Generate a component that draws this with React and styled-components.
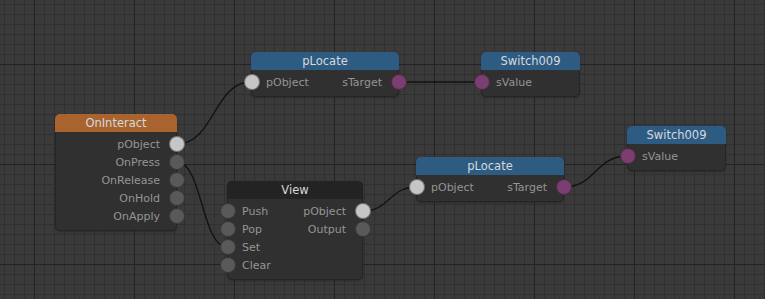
import React from 'react';
import styled, { createGlobalStyle } from 'styled-components';

const GlobalStyle = createGlobalStyle`
  html, body {
    margin: 0;
    padding: 0;
    background: #393939;
  }
  body {
    font-family: "DejaVu Sans", Verdana, sans-serif;
  }
`;

const Canvas = styled.div`
  position: relative;
  width: 765px;
  height: 299px;
  overflow: hidden;
  background-color: #3a3a3a;
  background-image:
    linear-gradient(to right, #232323 1px, transparent 1px),
    linear-gradient(to bottom, #232323 1px, transparent 1px),
    linear-gradient(to right, #303030 1px, transparent 1px),
    linear-gradient(to bottom, #303030 1px, transparent 1px);
  background-size: 100px 100px, 100px 100px, 10px 10px, 10px 10px;
  background-position: 34px 0, 0 64px, 4px 0, 0 4px;
`;

const Wires = styled.svg`
  position: absolute;
  left: 0;
  top: 0;
  width: 765px;
  height: 299px;
  pointer-events: none;
`;

const Node = styled.div`
  position: absolute;
  box-sizing: border-box;
  background: #303030;
  border: 1px solid #252525;
  border-radius: 5px;
  box-shadow: 0 1px 2px rgba(0, 0, 0, 0.25);
`;

const Header = styled.div`
  height: 18px;
  margin: -1px -1px 0;
  border-radius: 5px 5px 0 0;
  background: ${p => p.$color};
  color: #d6d9dc;
  font-size: 11.5px;
  line-height: 19px;
  text-align: center;
`;

const Body = styled.div`
  padding: 3px 0 5px;
`;

const Row = styled.div`
  position: relative;
  height: 18px;
  display: flex;
  align-items: center;
  justify-content: space-between;
  padding: 0 16px 0 14px;
  font-size: 11px;
  color: #959595;
`;

const Label = styled.span`
  margin-left: ${p => (p.$right ? 'auto' : '0')};
`;

const portColors = {
  obj: '#c6c6c6',
  evt: '#595959',
  str: '#7b3e70',
};

const Port = styled.span`
  position: absolute;
  top: 50%;
  ${p => (p.$side === 'in' ? 'left: -8.5px;' : 'right: -8.5px;')}
  width: 16px;
  height: 16px;
  margin-top: -8px;
  box-sizing: border-box;
  border-radius: 50%;
  background: ${p => portColors[p.$type]};
  border: 1px solid rgba(20, 20, 20, 0.45);
`;

const nodes = [
  {
    id: 'interact', title: 'OnInteract', color: '#a8632f', x: 55, y: 114, w: 122,
    rows: [
      { out: 'pObject', outType: 'obj' },
      { out: 'OnPress', outType: 'evt' },
      { out: 'OnRelease', outType: 'evt' },
      { out: 'OnHold', outType: 'evt' },
      { out: 'OnApply', outType: 'evt' },
    ],
  },
  {
    id: 'view', title: 'View', color: '#232323', x: 227, y: 181, w: 136,
    rows: [
      { in: 'Push', inType: 'evt', out: 'pObject', outType: 'obj' },
      { in: 'Pop', inType: 'evt', out: 'Output', outType: 'evt' },
      { in: 'Set', inType: 'evt' },
      { in: 'Clear', inType: 'evt' },
    ],
  },
  {
    id: 'locate1', title: 'pLocate', color: '#2e5b82', x: 251, y: 52, w: 148,
    rows: [{ in: 'pObject', inType: 'obj', out: 'sTarget', outType: 'str' }],
  },
  {
    id: 'switch1', title: 'Switch009', color: '#2e5b82', x: 481, y: 52, w: 99,
    rows: [{ in: 'sValue', inType: 'str' }],
  },
  {
    id: 'locate2', title: 'pLocate', color: '#2e5b82', x: 416, y: 157, w: 148,
    rows: [{ in: 'pObject', inType: 'obj', out: 'sTarget', outType: 'str' }],
  },
  {
    id: 'switch2', title: 'Switch009', color: '#2e5b82', x: 627, y: 126, w: 99,
    rows: [{ in: 'sValue', inType: 'str' }],
  },
];

// port centres: x = node edge, y = top + 18 header + 3 pad + 9 + 18*i
const portPos = (id, side, i) => {
  const n = nodes.find(nd => nd.id === id);
  return [side === 'in' ? n.x : n.x + n.w, n.y + 30 + 18 * i];
};

const links = [
  ['interact', 0, 'locate1', 0],
  ['interact', 1, 'view', 2],
  ['locate1', 0, 'switch1', 0],
  ['view', 0, 'locate2', 0],
  ['locate2', 0, 'switch2', 0],
];

const wirePath = ([x1, y1], [x2, y2]) => {
  const k = Math.max(Math.abs(x2 - x1) * 0.5, 25);
  return `M${x1} ${y1} C${x1 + k} ${y1}, ${x2 - k} ${y2}, ${x2} ${y2}`;
};

const GraphNode = ({ node }) => (
  <Node style={{ left: node.x, top: node.y, width: node.w }}>
    <Header $color={node.color}>{node.title}</Header>
    <Body>
      {node.rows.map((r, i) => (
        <Row key={i}>
          {r.in && <Port $side="in" $type={r.inType} />}
          {r.in && <Label>{r.in}</Label>}
          {r.out && <Label $right>{r.out}</Label>}
          {r.out && <Port $side="out" $type={r.outType} />}
        </Row>
      ))}
    </Body>
  </Node>
);

export default function App() {
  return (
    <>
      <GlobalStyle />
      <Canvas>
        <Wires viewBox="0 0 765 299">
          {links.map(([a, ai, b, bi], i) => (
            <path
              key={i}
              d={wirePath(portPos(a, 'out', ai), portPos(b, 'in', bi))}
              fill="none"
              stroke="#121212"
              strokeWidth="1.4"
            />
          ))}
        </Wires>
        {nodes.map(n => (
          <GraphNode key={n.id} node={n} />
        ))}
      </Canvas>
    </>
  );
}
